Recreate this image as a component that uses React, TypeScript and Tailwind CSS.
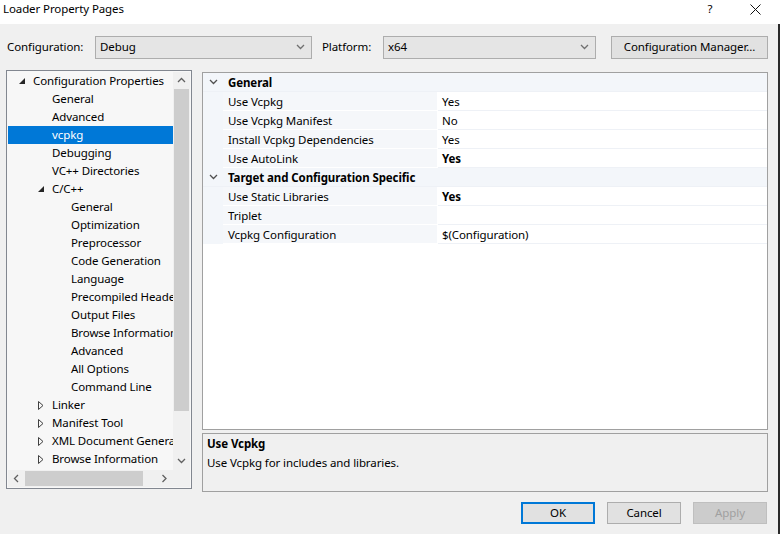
import React from "react";

type TreeNode = {
  label: string;
  level: 0 | 1 | 2;
  expander?: "open" | "closed";
  selected?: boolean;
};

const TREE: TreeNode[] = [
  { label: "Configuration Properties", level: 0, expander: "open" },
  { label: "General", level: 1 },
  { label: "Advanced", level: 1 },
  { label: "vcpkg", level: 1, selected: true },
  { label: "Debugging", level: 1 },
  { label: "VC++ Directories", level: 1 },
  { label: "C/C++", level: 1, expander: "open" },
  { label: "General", level: 2 },
  { label: "Optimization", level: 2 },
  { label: "Preprocessor", level: 2 },
  { label: "Code Generation", level: 2 },
  { label: "Language", level: 2 },
  { label: "Precompiled Headers", level: 2 },
  { label: "Output Files", level: 2 },
  { label: "Browse Information", level: 2 },
  { label: "Advanced", level: 2 },
  { label: "All Options", level: 2 },
  { label: "Command Line", level: 2 },
  { label: "Linker", level: 1, expander: "closed" },
  { label: "Manifest Tool", level: 1, expander: "closed" },
  { label: "XML Document Generator", level: 1, expander: "closed" },
  { label: "Browse Information", level: 1, expander: "closed" },
];

const INDENT: Record<number, string> = {
  0: "pl-[9px]",
  1: "pl-[28px]",
  2: "pl-[47px]",
};

type GridRow =
  | { kind: "header"; label: string }
  | { kind: "prop"; name: string; value: string; bold?: boolean };

const GRID: GridRow[] = [
  { kind: "header", label: "General" },
  { kind: "prop", name: "Use Vcpkg", value: "Yes" },
  { kind: "prop", name: "Use Vcpkg Manifest", value: "No" },
  { kind: "prop", name: "Install Vcpkg Dependencies", value: "Yes" },
  { kind: "prop", name: "Use AutoLink", value: "Yes", bold: true },
  { kind: "header", label: "Target and Configuration Specific" },
  { kind: "prop", name: "Use Static Libraries", value: "Yes", bold: true },
  { kind: "prop", name: "Triplet", value: "" },
  { kind: "prop", name: "Vcpkg Configuration", value: "$(Configuration)" },
];

const Chevron = ({ dir, color = "#606060" }: { dir: "up" | "down" | "left" | "right"; color?: string }) => {
  const pts: Record<string, string> = {
    down: "1,2 4.5,5.5 8,2",
    up: "1,6 4.5,2.5 8,6",
    left: "6,1 2.5,4.5 6,8",
    right: "2.5,1 6,4.5 2.5,8",
  };
  return (
    <svg width="9" height="9" viewBox="0 0 9 9" fill="none">
      <polyline points={pts[dir]} stroke={color} strokeWidth="1.3" />
    </svg>
  );
};

const Expander = ({ kind }: { kind: "open" | "closed" }) =>
  kind === "open" ? (
    <svg width="6" height="6" viewBox="0 0 6 6" className="ml-[2px]">
      <polygon points="6,0 6,6 0,6" fill="#262626" />
    </svg>
  ) : (
    <svg width="6" height="9" viewBox="0 0 6 9" className="ml-[2px]">
      <polygon points="0.5,0.5 5,4.5 0.5,8.5" fill="none" stroke="#404040" strokeWidth="1" />
    </svg>
  );

const Combo = ({ value, width }: { value: string; width: string }) => (
  <div
    className={`${width} h-[23px] flex items-center justify-between border border-[#adadad] bg-[#e5e5e5] pl-[4px] pr-[6px]`}
  >
    <span>{value}</span>
    <Chevron dir="down" color="#707070" />
  </div>
);

const Button = ({ label, primary, disabled }: { label: string; primary?: boolean; disabled?: boolean }) => (
  <div
    className={`w-[74px] h-[22px] flex items-center justify-center ${
      primary
        ? "border-2 border-[#0078d7] bg-[#e1e1e1] text-black"
        : disabled
        ? "border border-[#bfbfbf] bg-[#cccccc] text-[#a0a0a0]"
        : "border border-[#adadad] bg-[#e1e1e1] text-black"
    }`}
  >
    {label}
  </div>
);

export default function App() {
  return (
    <div
      className="w-[780px] h-[534px] flex flex-col bg-[#f0f0f0] text-[11.5px] tracking-[-0.1px] leading-[18px] text-black overflow-hidden"
      style={{ fontFamily: '"Noto Sans", "Segoe UI", sans-serif' }}
    >
      {/* Title bar */}
      <div className="h-[24px] shrink-0 bg-white flex items-start pl-[3px]">
        <span className="flex-1">Loader Property Pages</span>
        <span className="w-[20px] text-center mr-[30px]">?</span>
        <svg width="11" height="11" viewBox="0 0 11 11" className="mt-[4px] mr-[19px]">
          <path d="M0.5 0.5 L10.5 10.5 M10.5 0.5 L0.5 10.5" stroke="#111" strokeWidth="1" />
        </svg>
      </div>

      <div className="flex-1 flex flex-col border-r-2 border-[#2a2a2a]">
        {/* Configuration row */}
        <div className="mt-[11px] h-[24px] flex items-center pl-[7px]">
          <span className="w-[88px]">Configuration:</span>
          <Combo value="Debug" width="w-[217px]" />
          <span className="w-[61px] ml-[10px]">Platform:</span>
          <Combo value="x64" width="w-[213px]" />
          <div className="ml-[15px] w-[157px] h-[23px] flex items-center justify-center border border-[#adadad] bg-[#e1e1e1]">
            Configuration Manager...
          </div>
        </div>

        {/* Main */}
        <div className="mt-[11px] flex pl-[6px]">
          {/* Tree */}
          <div className="w-[186px] h-[419px] border border-[#828790] bg-[#f7f7f7] flex flex-col p-[1px]">
            <div className="flex-1 flex min-h-0">
              <div className="flex-1 overflow-hidden">
                {TREE.map((n, i) => (
                  <div
                    key={i}
                    className={`h-[18px] flex items-center whitespace-nowrap ${INDENT[n.level]} ${
                      n.selected ? "bg-[#0078d7] text-white" : ""
                    }`}
                  >
                    <span className="w-[16px] shrink-0 flex items-center">
                      {n.expander && <Expander kind={n.expander} />}
                    </span>
                    <span>{n.label}</span>
                  </div>
                ))}
              </div>
              {/* vertical scrollbar */}
              <div className="w-[17px] flex flex-col bg-[#f0f0f0]">
                <div className="h-[17px] flex items-center justify-center">
                  <Chevron dir="up" />
                </div>
                <div className="h-[322px] mx-[1px] bg-[#cdcdcd]" />
                <div className="flex-1" />
                <div className="h-[17px] flex items-center justify-center">
                  <Chevron dir="down" />
                </div>
              </div>
            </div>
            {/* horizontal scrollbar */}
            <div className="h-[17px] flex bg-[#f0f0f0]">
              <div className="w-[17px] flex items-center justify-center">
                <Chevron dir="left" />
              </div>
              <div className="w-[118px] my-[1px] bg-[#cdcdcd]" />
              <div className="flex-1" />
              <div className="w-[17px] flex items-center justify-center">
                <Chevron dir="right" />
              </div>
              <div className="w-[17px] bg-[#f0f0f0]" />
            </div>
          </div>

          {/* Right column */}
          <div className="ml-[10px] mt-[2px] flex flex-col">
            <div className="w-[566px] h-[358px] border border-[#a0a0a0] bg-white">
              {GRID.map((r, i) =>
                r.kind === "header" ? (
                  <div key={i} className="h-[19px] flex items-center bg-[#f3f6fa] border-b border-[#eef1f6]">
                    <span className="w-[20px] flex items-center justify-center">
                      <Chevron dir="down" color="#505050" />
                    </span>
                    <span className="pl-[5px] pt-[1px] font-bold">{r.label}</span>
                  </div>
                ) : (
                  <div key={i} className="h-[19px] flex">
                    <span className="w-[20px] bg-[#f3f6fa]" />
                    <span className="w-[214px] pl-[5px] pt-[1px] flex items-center bg-[#f5f7fa] border-b border-white">
                      {r.name}
                    </span>
                    <span className="w-[1px] bg-white" />
                    <span
                      className={`flex-1 pl-[4px] pt-[1px] flex items-center bg-white border-b border-[#eef1f6] ${
                        r.bold ? "font-bold" : ""
                      }`}
                    >
                      {r.value}
                    </span>
                  </div>
                )
              )}
            </div>

            <div className="mt-[3px] w-[566px] h-[59px] border border-[#a0a0a0] bg-[#f0f0f0] pl-[4px] leading-[19px]">
              <div className="font-bold">Use Vcpkg</div>
              <div>Use Vcpkg for includes and libraries.</div>
            </div>
          </div>
        </div>

        {/* Buttons */}
        <div className="mt-[10px] flex justify-end gap-[12px] pr-[11px]">
          <Button label="OK" primary />
          <Button label="Cancel" />
          <Button label="Apply" disabled />
        </div>
      </div>
    </div>
  );
}
